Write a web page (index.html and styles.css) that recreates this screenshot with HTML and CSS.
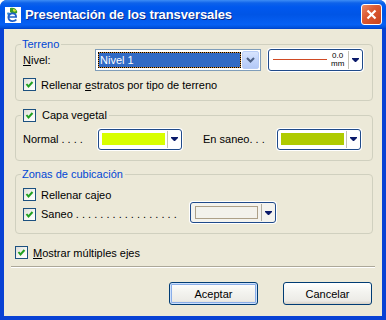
FILE: index.html
```html
<!DOCTYPE html>
<html lang="es">
<head>
  <meta charset="UTF-8">
  <title>Presentación de los transversales</title>
  <link rel="stylesheet" href="styles.css">
</head>
<body>

  <div class="window">
    <div class="titlebar">
      <svg class="app-icon" width="16" height="16" viewBox="0 0 16 16">
        <rect x="0" y="0" width="16" height="16" fill="#fff"/>
        <path d="M5 1 C8 0 11 1 12 4 C13 6 11 7 9 7 C7 7 6 6 5 5 Z" fill="#3a9a2a"/>
        <path d="M8 2 C10 2 11 3 11 4 C10 5 9 5 8 4 Z" fill="#d8e030"/>
        <path d="M2 6 C4 5 6 6 6 8 L3 9 Z" fill="#2e8ad8"/>
        <path d="M12 10 C12 6.5 9.5 5.5 7.5 5.5 C4.5 5.5 2.5 8 2.5 10.5 C2.5 13 4.5 15 7.5 15 C9.5 15 11 14 12 13 L10.5 12 C9.7 12.8 8.7 13.2 7.5 13.2 C5.8 13.2 4.6 12.2 4.4 10.8 L12 10.8 Z M4.5 9.3 C4.8 8 6 7.2 7.5 7.2 C9 7.2 10 8 10.2 9.3 Z" fill="#1f5fc8"/>
      </svg>
      <span class="title">Presentación de los transversales</span>
      <div class="close">
        <svg width="11" height="11" viewBox="0 0 11 11">
          <path d="M1.5 1.5 L9.5 9.5 M9.5 1.5 L1.5 9.5" stroke="#fff" stroke-width="2.2"/>
        </svg>
      </div>
    </div>

    <div class="client">

      <div class="group group-terreno">
        <div class="group-title"><span class="legend">Terreno</span></div>
        <div class="row row-nivel">
          <label class="lbl lbl-nivel"><u>N</u>ivel:</label>
          <div class="select">
            <div class="select-value">Nivel 1</div>
            <div class="select-btn">
              <svg width="9" height="6" viewBox="0 0 9 6"><path d="M1 1 L4.5 4.5 L8 1" fill="none" stroke="#4d6185" stroke-width="2"/></svg>
            </div>
          </div>
          <div class="combo combo-line">
            <div class="line-sample"></div>
            <div class="thickness"><span>0.0</span><span>mm</span></div>
            <div class="drop">
              <svg width="7" height="4" viewBox="0 0 7 4"><path d="M0 0 H7 V1 L4 4 H3 L0 1 Z" fill="#0a1a6a"/></svg>
            </div>
          </div>
        </div>
        <div class="row check-row row-estratos">
          <span class="check"><svg width="11" height="11" viewBox="0 0 11 11"><path d="M2.5 5 L4.5 7.5 L8.5 3" fill="none" stroke="#21a121" stroke-width="2"/></svg></span>
          <span>Rellenar <u>e</u>stratos por tipo de terreno</span>
        </div>
      </div>

      <div class="group group-capa">
        <div class="group-title">
          <span class="legend legend-check">
            <span class="check"><svg width="11" height="11" viewBox="0 0 11 11"><path d="M2.5 5 L4.5 7.5 L8.5 3" fill="none" stroke="#21a121" stroke-width="2"/></svg></span>
            <span class="legend-text">Capa vegetal</span>
          </span>
        </div>
        <div class="row row-colors">
          <span class="lbl lbl-normal">Normal . . . .</span>
          <div class="combo combo-color">
            <div class="swatch swatch-normal"></div>
            <div class="drop">
              <svg width="7" height="4" viewBox="0 0 7 4"><path d="M0 0 H7 V1 L4 4 H3 L0 1 Z" fill="#0a1a6a"/></svg>
            </div>
          </div>
          <span class="lbl lbl-saneo">En saneo. . .</span>
          <div class="combo combo-color">
            <div class="swatch swatch-saneo"></div>
            <div class="drop">
              <svg width="7" height="4" viewBox="0 0 7 4"><path d="M0 0 H7 V1 L4 4 H3 L0 1 Z" fill="#0a1a6a"/></svg>
            </div>
          </div>
        </div>
      </div>

      <div class="group group-zonas">
        <div class="group-title"><span class="legend">Zonas de cubicación</span></div>
        <div class="row check-row row-cajeo">
          <span class="check"><svg width="11" height="11" viewBox="0 0 11 11"><path d="M2.5 5 L4.5 7.5 L8.5 3" fill="none" stroke="#21a121" stroke-width="2"/></svg></span>
          <span>Rellenar cajeo</span>
        </div>
        <div class="row row-saneo">
          <span class="check"><svg width="11" height="11" viewBox="0 0 11 11"><path d="M2.5 5 L4.5 7.5 L8.5 3" fill="none" stroke="#21a121" stroke-width="2"/></svg></span>
          <span class="saneo-text">Saneo . . . . . . . . . . . . . . . . .</span>
          <div class="combo combo-empty">
            <div class="swatch swatch-empty"></div>
            <div class="drop">
              <svg width="7" height="4" viewBox="0 0 7 4"><path d="M0 0 H7 V1 L4 4 H3 L0 1 Z" fill="#0a1a6a"/></svg>
            </div>
          </div>
        </div>
      </div>

      <div class="row check-row row-ejes">
        <span class="check"><svg width="11" height="11" viewBox="0 0 11 11"><path d="M2.5 5 L4.5 7.5 L8.5 3" fill="none" stroke="#21a121" stroke-width="2"/></svg></span>
        <span><u>M</u>ostrar múltiples ejes</span>
      </div>

      <div class="separator"></div>

      <div class="buttons">
        <button class="btn btn-default">Aceptar</button>
        <button class="btn">Cancelar</button>
      </div>

    </div>
  </div>

</body>
</html>
```

FILE: styles.css
```css
body {
  margin: 0;
  background-color: #ffffff;
  font-family: "Liberation Sans", Arial, sans-serif;
  font-size: 11px;
  color: #000;
}

u {
  text-decoration: underline;
  text-underline-offset: 1px;
}

.window {
  width: 386px;
  height: 320px;
  display: flex;
  flex-direction: column;
  background-color: #0841d4;
  border-radius: 7px 7px 0 0;
  overflow: hidden;
}

/* title bar */
.titlebar {
  height: 29px;
  flex: none;
  display: flex;
  align-items: center;
  padding: 0 4px 0 5px;
  background: linear-gradient(to bottom, #3d8df5 0, #0e62ea 3px, #0058ee 7px, #0055e6 50%, #0660f4 85%, #0051dc 95%, #0040c8 100%);
}

.app-icon {
  flex: none;
  margin-top: 1px;
}

.title {
  margin-left: 4px;
  color: #fff;
  font-weight: bold;
  font-size: 13px;
  letter-spacing: -0.1px;
  text-shadow: 1px 1px 0 #0a2a8a;
}

.close {
  margin-left: auto;
  width: 21px;
  height: 21px;
  box-sizing: border-box;
  border: 1px solid #fff;
  border-radius: 3px;
  background: linear-gradient(135deg, #ea8a66 0, #dc5a34 40%, #c8431c 100%);
  display: flex;
  align-items: center;
  justify-content: center;
}

/* client area */
.client {
  flex: 1;
  margin: 0 4px 4px 4px;
  padding: 0 9px 0 11px;
  background-color: #ece9d8;
  display: flex;
  flex-direction: column;
}

.group {
  border: 1px solid #d0d0bf;
  border-radius: 4px;
  padding: 0 8px 9px 7px;
}

.group-title {
  display: flex;
  height: 13px;
  margin: -7px 0 0 -2px;
}

.legend {
  display: flex;
  align-items: center;
  padding: 0 2px 0 1px;
  background-color: #ece9d8;
  color: #0046d5;
  line-height: 13px;
}

.legend-check {
  color: #000;
  padding-left: 2px;
}

.legend-text {
  margin-left: 6px;
}

.group-terreno {
  margin-top: 15px;
}

.group-capa {
  margin-top: 14px;
  padding-bottom: 10px;
}

.group-zonas {
  margin-top: 13px;
}

.row {
  display: flex;
  align-items: center;
}

.check-row {
  height: 13px;
}

.check-row .check {
  margin-right: 5px;
}

.check {
  flex: none;
  width: 13px;
  height: 13px;
  box-sizing: border-box;
  border: 1px solid #1c5180;
  background: linear-gradient(135deg, #dcdcd7 0, #f4f4f0 50%, #ffffff 100%);
  display: flex;
  align-items: center;
  justify-content: center;
}

/* Nivel row */
.row-nivel {
  height: 22px;
  margin-top: -2px;
}

.lbl-nivel {
  width: 72px;
}

.select {
  width: 166px;
  height: 22px;
  box-sizing: border-box;
  border: 1px solid #7f9db9;
  background-color: #fff;
  padding: 1px;
  display: flex;
  align-items: center;
}

.select-value {
  width: 143px;
  height: 16px;
  margin-left: 1px;
  box-sizing: border-box;
  background-color: #316ac5;
  color: #fff;
  border: 1px solid #d8903a;
  outline: 1px dotted #000;
  outline-offset: -1px;
  padding-left: 1px;
  line-height: 14px;
}

.select-btn {
  width: 17px;
  height: 18px;
  margin-left: auto;
  box-sizing: border-box;
  border: 1px solid #b9cdf6;
  border-radius: 2px;
  background: linear-gradient(to bottom, #d8e4fd 0, #c3d5fb 50%, #b4c9f7 100%);
  display: flex;
  align-items: center;
  justify-content: center;
}

.combo {
  box-sizing: border-box;
  border: 1px solid #1f4a8a;
  border-radius: 3px;
  box-shadow: 0 0 0 1px #fff;
  background-color: #fff;
  display: flex;
  align-items: center;
}

.drop {
  margin-left: auto;
  width: 13px;
  height: calc(100% - 2px);
  border-left: 1px solid #c4c2b6;
  display: flex;
  align-items: center;
  justify-content: center;
}

.combo-line {
  width: 95px;
  height: 22px;
  margin-left: 7px;
  margin-top: -1px;
  padding-left: 4px;
}

.line-sample {
  width: 54px;
  height: 1px;
  background-color: #d04a24;
}

.thickness {
  margin-left: 4px;
  display: flex;
  flex-direction: column;
  align-items: center;
  font-size: 8px;
  line-height: 8px;
}

.row-estratos {
  margin-top: 7px;
}

/* Capa vegetal */
.row-colors {
  height: 22px;
  margin-top: 6px;
}

.lbl-normal {
  width: 75px;
}

.lbl-saneo {
  width: 74px;
  margin-left: 21px;
}

.combo-color {
  width: 84px;
  height: 21px;
  padding-left: 3px;
}

.swatch {
  width: 63px;
  height: 12px;
}

.swatch-normal {
  background-color: #d8ff00;
}

.swatch-saneo {
  background-color: #afcb00;
}

/* Zonas de cubicación */
.row-cajeo {
  margin-top: 7px;
}

.row-saneo {
  height: 22px;
  margin-top: 1px;
  align-items: flex-start;
}

.row-saneo .check {
  margin-top: 6px;
  margin-right: 5px;
}

.saneo-text {
  width: 149px;
  line-height: 13px;
  margin-top: 6px;
}

.combo-empty {
  width: 86px;
  height: 21px;
  padding-left: 4px;
  background-color: #f4f3ee;
}

.swatch-empty {
  width: 63px;
  height: 13px;
  box-sizing: border-box;
  border: 1px solid #ada088;
  background-color: #f3f2ec;
}

.combo-empty .drop {
  border-left-color: #b0ada0;
}

/* bottom */
.row-ejes {
  margin-top: 12px;
}

.separator {
  margin: 7px -2px 0 -4px;
  height: 1px;
  border-top: 1px solid #aca899;
  background-color: #fff;
}

.buttons {
  display: flex;
  justify-content: flex-end;
  gap: 25px;
  margin-top: 14px;
  margin-right: 1px;
}

.btn {
  width: 89px;
  height: 23px;
  border: 1px solid #003c74;
  border-radius: 3px;
  background: linear-gradient(to bottom, #ffffff 0, #f4f4f0 40%, #ecebe6 85%, #d6d0c5 100%);
  font-family: "Liberation Sans", Arial, sans-serif;
  font-size: 11px;
  color: #000;
  padding: 0;
}

.btn-default {
  box-shadow: inset 0 0 0 1px #cde0fc, inset 0 0 0 2px #8aaee8;
}
```
